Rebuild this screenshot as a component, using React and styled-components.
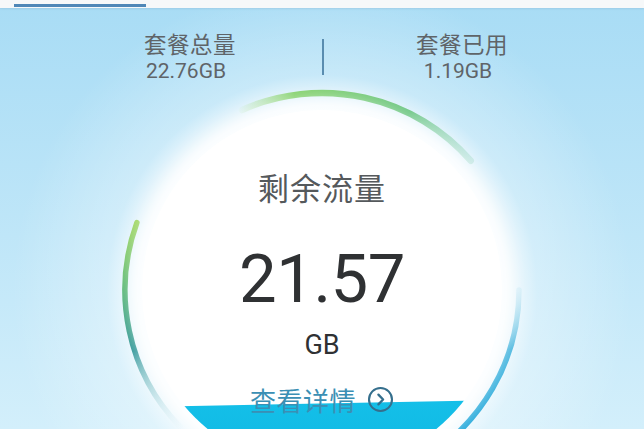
import React from "react";
import styled, { createGlobalStyle } from "styled-components";

const Global = createGlobalStyle`
  html, body { margin: 0; padding: 0; }
  body { font-family: "Noto Sans CJK SC", "Noto Sans", sans-serif; }
`;

const Page = styled.div`
  position: relative;
  width: 644px;
  height: 429px;
  overflow: hidden;
  background:
    radial-gradient(circle at 322px 290px, rgba(255,255,255,0.95) 0px, rgba(255,255,255,0.85) 185px, rgba(255,255,255,0.3) 215px, rgba(255,255,255,0) 310px),
    linear-gradient(180deg, #a8dcf5 0%, #bfe6f8 55%, #d3effb 100%);
`;

const TabStrip = styled.div`
  height: 8px;
  background: #f6f8f9;
  display: flex;
  align-items: flex-end;
  padding-left: 14px;
  box-shadow: 0 1px 2px rgba(120, 160, 190, 0.25);
`;

const TabIndicator = styled.div`
  width: 132px;
  height: 3px;
  margin-bottom: 1px;
  background: #4f87b7;
`;

const Stats = styled.div`
  display: flex;
  align-items: center;
  height: 54px;
  margin-top: 22px;
  padding-left: 92px;
`;

const Stat = styled.div`
  width: 196px;
  display: flex;
  flex-direction: column;
  align-items: center;
  color: #5f6468;
`;

const StatLabel = styled.div`
  font-size: 22.5px;
  line-height: 26px;
  letter-spacing: 0.5px;
`;

const StatValue = styled.div`
  font-family: Roboto, "Noto Sans", sans-serif;
  font-size: 21px;
  line-height: 26px;
  margin-top: 2px;
  margin-right: ${(p) => p.$shift || 0}px;
`;

const Divider = styled.div`
  width: 2px;
  height: 36px;
  background: #5a8db0;
  margin: 0 ${(p) => p.$right}px 0 ${(p) => p.$left}px;
`;

const Gauge = styled.div`
  position: relative;
  margin-top: 26px;
  display: flex;
  justify-content: center;
`;

const Ring = styled.svg`
  position: absolute;
  left: calc(50% - 210px);
  top: -30px;
  width: 420px;
  height: 420px;
  overflow: visible;
`;

const Dial = styled.div`
  position: relative;
  width: 360px;
  height: 360px;
  border-radius: 50%;
  background: #ffffff;
  box-shadow: 0 0 18px 8px rgba(255, 255, 255, 0.8);
  overflow: hidden;
  display: flex;
  flex-direction: column;
  align-items: center;
  padding-top: 58px;
  box-sizing: border-box;
`;

const DialLabel = styled.div`
  font-size: 31px;
  line-height: 37px;
  color: #55595c;
  letter-spacing: 1px;
`;

const DialValue = styled.div`
  font-family: Roboto, "Noto Sans", sans-serif;
  font-size: 67px;
  line-height: 68px;
  margin-top: 40px;
  color: #2f3133;
  letter-spacing: -0.5px;
`;

const DialUnit = styled.div`
  font-family: Roboto, "Noto Sans", sans-serif;
  font-size: 27px;
  line-height: 27px;
  margin-top: 19px;
  color: #2f3133;
`;

const DetailLink = styled.div`
  position: relative;
  z-index: 1;
  display: flex;
  align-items: center;
  gap: 11px;
  margin-top: 25px;
  font-size: 26px;
  line-height: 31px;
  color: #3b8fb4;
  letter-spacing: 0.5px;
`;

const Water = styled.div`
  position: absolute;
  left: 0;
  right: 0;
  bottom: 0;
  height: 70px;
  background: linear-gradient(180deg, #14bfe8 0%, #0fb8e3 100%);
  clip-path: polygon(0 7px, 100% 0, 100% 100%, 0 100%);
`;

const ChevronCircle = () => (
  <svg width="27" height="27" viewBox="0 0 27 27" fill="none">
    <circle cx="13.5" cy="13.5" r="11.5" stroke="#356f8d" strokeWidth="2.1" />
    <path d="M11.4 8.6 L16.1 13.5 L11.4 18.4" stroke="#356f8d" strokeWidth="2.3" strokeLinecap="round" strokeLinejoin="round" />
  </svg>
);

export default function App() {
  return (
    <>
      <Global />
      <Page>
        <TabStrip>
          <TabIndicator />
        </TabStrip>
        <Stats>
          <Stat>
            <StatLabel>套餐总量</StatLabel>
            <StatValue $shift={8}>22.76GB</StatValue>
          </Stat>
          <Divider $left={34} $right={40} />
          <Stat>
            <StatLabel>套餐已用</StatLabel>
            <StatValue $shift={8}>1.19GB</StatValue>
          </Stat>
        </Stats>
        <Gauge>
          <Ring viewBox="0 0 420 420">
            <defs>
              <linearGradient id="gTop" gradientUnits="userSpaceOnUse" x1="125" y1="30" x2="360" y2="82">
                <stop offset="0" stopColor="#9fd97a" stopOpacity="0" />
                <stop offset="0.22" stopColor="#86d26f" stopOpacity="1" />
                <stop offset="0.7" stopColor="#6fc785" stopOpacity="1" />
                <stop offset="1" stopColor="#9fd8c6" stopOpacity="0.4" />
              </linearGradient>
              <linearGradient id="gLeft" gradientUnits="userSpaceOnUse" x1="0" y1="142" x2="0" y2="350">
                <stop offset="0" stopColor="#9ed65f" stopOpacity="0.95" />
                <stop offset="0.3" stopColor="#5fbb74" />
                <stop offset="0.62" stopColor="#36999c" />
                <stop offset="1" stopColor="#c8e8f2" stopOpacity="0" />
              </linearGradient>
              <linearGradient id="gRight" gradientUnits="userSpaceOnUse" x1="0" y1="210" x2="0" y2="380">
                <stop offset="0" stopColor="#b2e0f0" stopOpacity="0.3" />
                <stop offset="0.35" stopColor="#4fb9e0" />
                <stop offset="1" stopColor="#1aa5da" />
              </linearGradient>
            </defs>
            <path d="M129.9 30 A197 197 0 0 1 358.7 80.7" stroke="url(#gTop)" strokeWidth="6.5" fill="none" strokeLinecap="round" />
            <path d="M24.9 142.6 A197 197 0 0 0 68.3 346.9" stroke="url(#gLeft)" strokeWidth="5.5" fill="none" strokeLinecap="round" />
            <path d="M407 210 A197 197 0 0 1 308.5 380.6" stroke="url(#gRight)" strokeWidth="5.5" fill="none" strokeLinecap="round" />
          </Ring>
          <Dial>
            <DialLabel>剩余流量</DialLabel>
            <DialValue>21.57</DialValue>
            <DialUnit>GB</DialUnit>
            <DetailLink>
              查看详情
              <ChevronCircle />
            </DetailLink>
            <Water />
          </Dial>
        </Gauge>
      </Page>
    </>
  );
}
